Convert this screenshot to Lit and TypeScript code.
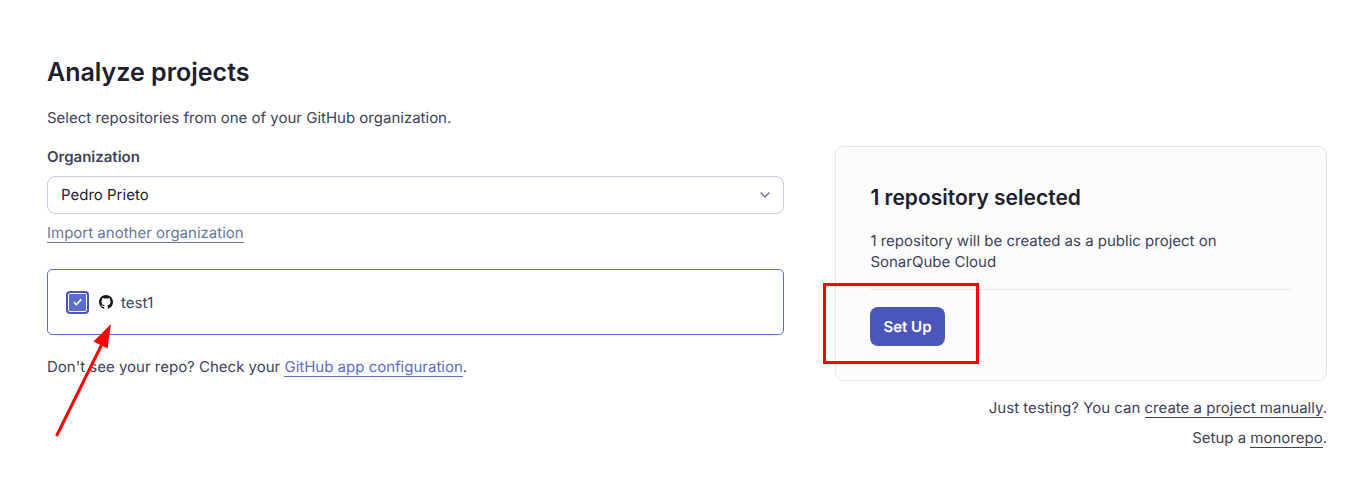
import { LitElement, html, css } from "lit";
import { customElement, state } from "lit/decorators.js";

@customElement("app-root")
export class AppRoot extends LitElement {
  @state() private selected = true;

  static styles = css`
    :host {
      display: block;
      background: #fff;
      color: #3e4357;
      font: 400 15px/21px Inter, sans-serif;
      text-rendering: geometricPrecision;
    }
    * {
      box-sizing: border-box;
    }
    .page {
      padding: 56px 23px 48px 47px;
    }
    h1,
    h2,
    p {
      margin: 0;
    }
    h1,
    h2 {
      font-weight: 600;
      color: #1d2030;
      text-rendering: auto;
    }
    h1 {
      font-size: 25px;
      line-height: 32px;
    }
    .intro {
      margin: 19px 0 18px;
    }
    .columns {
      display: grid;
      grid-template-columns: 3fr 2fr;
      gap: 51px;
      align-items: start;
    }
    .label {
      display: block;
      font-weight: 600;
      margin-bottom: 9px;
    }
    .picker {
      display: grid;
      align-items: center;
      margin-bottom: 8px;
    }
    .picker > * {
      grid-area: 1 / 1;
    }
    .select {
      appearance: none;
      width: 100%;
      height: 38px;
      padding: 0 36px 1px 13px;
      border: 1px solid #c5cddf;
      border-radius: 8px;
      background: #fff;
      color: #1d2030;
      font: inherit;
      text-rendering: inherit;
    }
    .chevron {
      justify-self: end;
      margin-right: 14px;
      pointer-events: none;
    }
    a {
      color: inherit;
      text-decoration: none;
      border-bottom: 1px solid currentColor;
    }
    .import {
      color: #69779c;
    }
    .config {
      color: #5d6cd0;
    }
    .repo {
      position: relative;
      display: flex;
      align-items: center;
      height: 66px;
      margin: 26px 0 21px;
      padding: 0 18px;
      border: 1px solid #5d6cd0;
      border-radius: 5px;
    }
    .repo-label {
      display: flex;
      align-items: center;
      gap: 8px;
    }
    .tick {
      display: grid;
      place-items: center;
      width: 23px;
      height: 23px;
      margin-right: 2px;
    }
    .tick > * {
      grid-area: 1 / 1;
    }
    .tick input {
      appearance: none;
      width: 23px;
      height: 23px;
      margin: 0;
      border: 2px solid #4b56ba;
      border-radius: 4px;
      background: #fff;
    }
    .tick input:checked {
      background: #5d6cd0;
      box-shadow: inset 0 0 0 1px #fff;
    }
    .tick svg {
      z-index: 1;
      pointer-events: none;
    }
    .arrow {
      position: absolute;
      top: 54px;
      left: 6px;
      z-index: 2;
      pointer-events: none;
    }
    .panel {
      padding: 35px 34px 34px;
      border: 1px solid #e1e6f3;
      border-radius: 8px;
      background: #fcfcfd;
    }
    h2 {
      font-size: 21px;
      line-height: 32px;
    }
    .summary {
      margin: 16px 0 17px;
      max-width: 360px;
    }
    .actions {
      padding-top: 17px;
      border-top: 1px solid #e6e9ec;
    }
    .highlight {
      position: relative;
      display: inline-block;
      vertical-align: top;
    }
    .highlight::after {
      content: "";
      position: absolute;
      inset: -24px -34px -18px -47px;
      border: 3px solid #f00;
      pointer-events: none;
    }
    button {
      display: block;
      height: 39px;
      padding: 0 13px;
      border: 0;
      border-radius: 8px;
      background: #4b56ba;
      color: #fff;
      font: inherit;
      font-weight: 600;
      text-rendering: inherit;
    }
    .links {
      display: grid;
      gap: 9px;
      margin-top: 16px;
      text-align: right;
    }
  `;

  private toggle(e: Event) {
    this.selected = (e.target as HTMLInputElement).checked;
  }

  render() {
    return html`
      <main class="page">
        <h1>Analyze projects</h1>
        <p class="intro">Select repositories from one of your GitHub organization.</p>
        <div class="columns">
          <section>
            <label class="label" for="org">Organization</label>
            <div class="picker">
              <select class="select" id="org">
                <option>Pedro Prieto</option>
              </select>
              <svg class="chevron" width="10" height="6" viewBox="0 0 10 6" fill="none" stroke="#69779c" stroke-width="1.4" aria-hidden="true">
                <path d="M.6.6 5 5 9.4.6" />
              </svg>
            </div>
            <p><a class="import" href="#import">Import another organization</a></p>

            <div class="repo">
              <label class="repo-label">
                <span class="tick">
                  <input type="checkbox" .checked=${this.selected} @change=${this.toggle} />
                  <svg width="9" height="8" viewBox="0 0 9 8" fill="none" stroke="#fff" stroke-width="1.6" aria-hidden="true">
                    <path d="M.8 4.1 3.4 6.5 8.2 1.4" />
                  </svg>
                </span>
                <svg width="14" height="14" viewBox="0 0 16 16" fill="#191717" aria-hidden="true">
                  <path d="M8 0C3.58 0 0 3.58 0 8c0 3.54 2.29 6.53 5.47 7.59.4.07.55-.17.55-.38 0-.19-.01-.82-.01-1.49-2.01.37-2.53-.49-2.69-.94-.09-.23-.48-.94-.82-1.13-.28-.15-.68-.52-.01-.53.63-.01 1.08.58 1.23.82.72 1.21 1.87.87 2.33.66.07-.52.28-.87.51-1.07-1.78-.2-3.64-.89-3.64-3.95 0-.87.31-1.59.82-2.15-.08-.2-.36-1.02.08-2.12 0 0 .67-.21 2.2.82.64-.18 1.32-.27 2-.27s1.36.09 2 .27c1.53-1.04 2.2-.82 2.2-.82.44 1.1.16 1.92.08 2.12.51.56.82 1.27.82 2.15 0 3.07-1.87 3.75-3.65 3.95.29.25.54.73.54 1.48 0 1.07-.01 1.93-.01 2.2 0 .21.15.46.55.38A8.01 8.01 0 0 0 16 8c0-4.42-3.58-8-8-8Z" />
                </svg>
                <span>test1</span>
              </label>
              <svg class="arrow" width="60" height="114" viewBox="0 0 60 114" aria-hidden="true">
                <path d="M2.5 112 48 20" stroke="#f00" stroke-width="3" fill="none" />
                <path d="M57 0 39.5 17.5 53.5 24.5Z" fill="#f00" />
              </svg>
            </div>

            <p>Don't see your repo? Check your <a class="config" href="#config">GitHub app configuration</a>.</p>
          </section>

          <aside>
            <div class="panel">
              <h2>1 repository selected</h2>
              <p class="summary">1 repository will be created as a public project on SonarQube Cloud</p>
              <div class="actions">
                <span class="highlight"><button type="button">Set Up</button></span>
              </div>
            </div>
            <div class="links">
              <p>Just testing? You can <a href="#manual">create a project manually</a>.</p>
              <p>Setup a <a href="#monorepo">monorepo</a>.</p>
            </div>
          </aside>
        </div>
      </main>
    `;
  }
}
